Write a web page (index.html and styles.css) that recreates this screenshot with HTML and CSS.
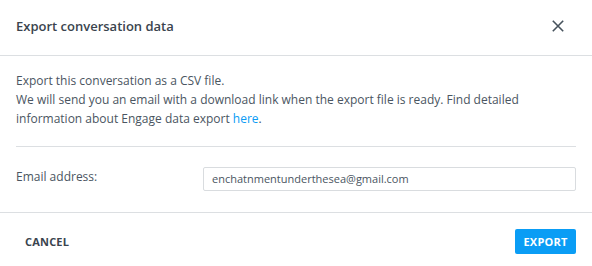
FILE: index.html
```html
<!DOCTYPE html>
<html>
<head>
<meta charset="utf-8">
<link rel="stylesheet" href="styles.css">
</head>
<body>
<div class="dialog">
  <div class="header">
    <div class="title">Export conversation data</div>
    <button class="close" aria-label="Close">
      <svg width="12" height="12" viewBox="0 0 12 12"><path d="M0.8 0.8 L11.2 11.2 M11.2 0.8 L0.8 11.2" stroke="#46525c" stroke-width="1.6" fill="none"/></svg>
    </button>
  </div>
  <div class="body">
    <p class="desc">Export this conversation as a CSV file.<br>We will send you an email with a download link when the export file is ready. Find detailed information about Engage data export <a href="#">here</a>.</p>
    <div class="divider"></div>
    <div class="row">
      <label class="label">Email address:</label>
      <div class="input">enchatnmentunderthesea@gmail.com</div>
    </div>
  </div>
  <div class="footer">
    <button class="cancel">CANCEL</button>
    <button class="export">EXPORT</button>
  </div>
</div>
</body>
</html>
```
FILE: styles.css
```css
* { box-sizing: border-box; }
html, body { margin: 0; padding: 0; background: #fff; }
body { font-family: "Open Sans", "Noto Sans", sans-serif; color: #4a5561; width: 592px; height: 266px; overflow: hidden; }
.dialog { width: 592px; height: 266px; display: flex; flex-direction: column; }
.header { height: 56px; border-bottom: 1px solid #dcdfe2; display: flex; align-items: center; justify-content: space-between; padding: 0 28px 0 16px; }
.title { font-size: 13px; font-weight: 600; color: #3a444e; margin-top: -3px; }
.close { border: 0; background: none; padding: 0; width: 12px; height: 12px; display: flex; margin-top: -3px; }
.body { padding: 15px 16px 0 16px; }
.desc { margin: 0; font-size: 12px; line-height: 19px; }
.desc a { color: #0a9cf5; text-decoration: none; }
.divider { height: 1px; background: #dcdfe2; margin-top: 18px; }
.row { display: flex; align-items: flex-start; padding-top: 20px; height: 65px; }
.label { width: 187px; font-size: 12px; line-height: 19px; }
.input { width: 373px; height: 24px; border: 1px solid #d9dcdf; border-radius: 2px; font-size: 11px; line-height: 22px; padding-left: 8px; color: #4a5561; }
.footer { flex: 1; border-top: 1px solid #dcdfe2; display: flex; align-items: center; justify-content: space-between; padding: 3px 16px 0 25px; }
.cancel { border: 0; background: none; padding: 0; font-family: inherit; font-size: 11px; font-weight: 700; color: #3a444e; letter-spacing: 0.2px; }
.export { border: 0; background: #0a9df5; color: #fff; font-family: inherit; font-size: 11px; font-weight: 700; width: 61px; height: 25px; border-radius: 2px; padding: 0; letter-spacing: 0.2px; margin-top: 1px; }
```
